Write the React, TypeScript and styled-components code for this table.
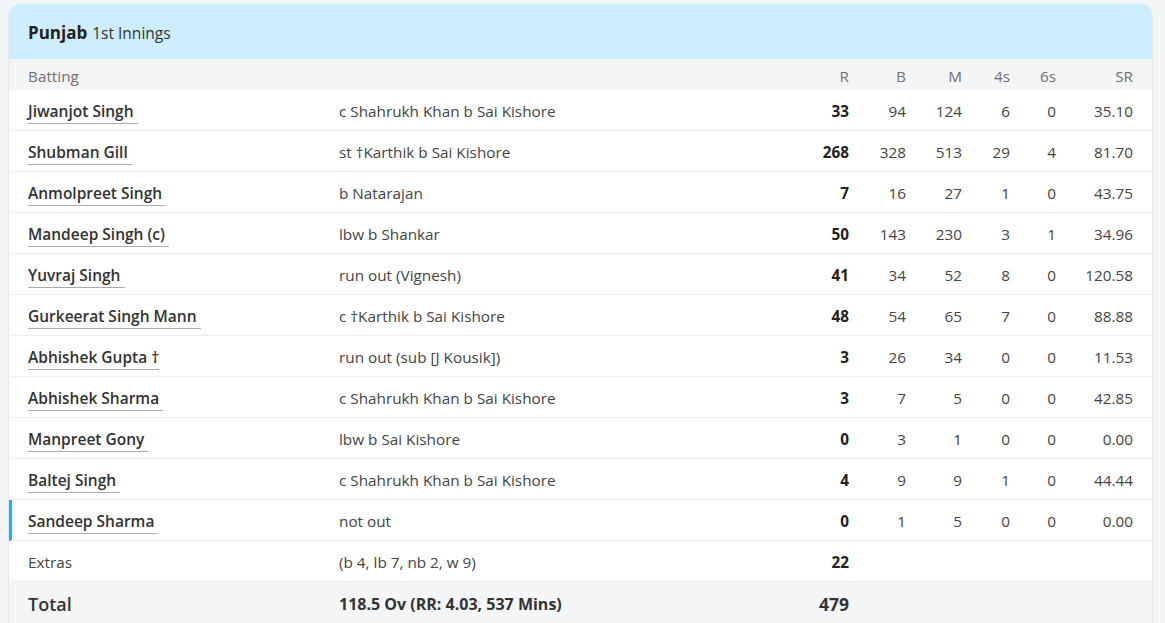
import styled, { createGlobalStyle } from 'styled-components'

interface IBatter {
  name: string
  extra?: string
  dismissal: string
  r: number
  b: number
  m: number
  fours: number
  sixes: number
  sr: string
  atCrease?: boolean
}

const batters: IBatter[] = [
  { name: 'Jiwanjot Singh', dismissal: 'c Shahrukh Khan b Sai Kishore', r: 33, b: 94, m: 124, fours: 6, sixes: 0, sr: '35.10' },
  { name: 'Shubman Gill', dismissal: 'st †Karthik b Sai Kishore', r: 268, b: 328, m: 513, fours: 29, sixes: 4, sr: '81.70' },
  { name: 'Anmolpreet Singh', dismissal: 'b Natarajan', r: 7, b: 16, m: 27, fours: 1, sixes: 0, sr: '43.75' },
  { name: 'Mandeep Singh (c)', dismissal: 'lbw b Shankar', r: 50, b: 143, m: 230, fours: 3, sixes: 1, sr: '34.96' },
  { name: 'Yuvraj Singh', dismissal: 'run out (Vignesh)', r: 41, b: 34, m: 52, fours: 8, sixes: 0, sr: '120.58' },
  { name: 'Gurkeerat Singh Mann', dismissal: 'c †Karthik b Sai Kishore', r: 48, b: 54, m: 65, fours: 7, sixes: 0, sr: '88.88' },
  { name: 'Abhishek Gupta', extra: '†', dismissal: 'run out (sub [J Kousik])', r: 3, b: 26, m: 34, fours: 0, sixes: 0, sr: '11.53' },
  { name: 'Abhishek Sharma', dismissal: 'c Shahrukh Khan b Sai Kishore', r: 3, b: 7, m: 5, fours: 0, sixes: 0, sr: '42.85' },
  { name: 'Manpreet Gony', dismissal: 'lbw b Sai Kishore', r: 0, b: 3, m: 1, fours: 0, sixes: 0, sr: '0.00' },
  { name: 'Baltej Singh', dismissal: 'c Shahrukh Khan b Sai Kishore', r: 4, b: 9, m: 9, fours: 1, sixes: 0, sr: '44.44' },
  { name: 'Sandeep Sharma', dismissal: 'not out', r: 0, b: 1, m: 5, fours: 0, sixes: 0, sr: '0.00', atCrease: true },
]

export default function App() {
  return (
    <>
      <GlobalStyle />
      <Card>
        <Header>
          <Team>Punjab</Team>
          <Innings>1st Innings</Innings>
        </Header>
        <HeadRow>
          <span>Batting</span>
          <span />
          <Num>R</Num>
          <Num>B</Num>
          <Num>M</Num>
          <Num>4s</Num>
          <Num>6s</Num>
          <Num>SR</Num>
        </HeadRow>
        {batters.map((p) => (
          <Row key={p.name} $active={p.atCrease}>
            <span>
              <Name>
                {p.name}
                {p.extra ? ` ${p.extra}` : '\u00a0'}
              </Name>
            </span>
            <span>{p.dismissal}</span>
            <Runs>{p.r}</Runs>
            <Num>{p.b}</Num>
            <Num>{p.m}</Num>
            <Num>{p.fours}</Num>
            <Num>{p.sixes}</Num>
            <Num>{p.sr}</Num>
          </Row>
        ))}
        <Row>
          <span>Extras</span>
          <span>(b 4, lb 7, nb 2, w 9)</span>
          <Runs>22</Runs>
        </Row>
        <TotalRow>
          <TotalLabel>Total</TotalLabel>
          <TotalInfo>118.5 Ov (RR: 4.03, 537 Mins)</TotalInfo>
          <TotalRuns>479</TotalRuns>
        </TotalRow>
      </Card>
    </>
  )
}

const GlobalStyle = createGlobalStyle`
  body {
    margin: 0;
    padding: 4px 12px 0 8px;
    background: #f4f5f7;
    font-family: 'Open Sans', 'Noto Sans', sans-serif;
    color: #333;
  }
`

const Card = styled.div`
  background: #fff;
  border: 1px solid #e6e8eb;
  border-top: none;
  border-radius: 12px 12px 0 0;
  overflow: hidden;
`

const Header = styled.div`
  display: flex;
  align-items: baseline;
  gap: 5px;
  height: 55px;
  padding: 0 19px;
  background: #cdedfd;
  line-height: 58px;
`

const Team = styled.span`
  font-size: 17px;
  font-weight: 700;
  color: #222;
`

const Innings = styled.span`
  font-size: 15.5px;
  color: #333;
`

const grid = `
  display: grid;
  grid-template-columns: 311px 1fr 60px 57px 56px 48px 46px 77px;
  align-items: center;
  padding: 0 19px 0 19px;
`

const HeadRow = styled.div`
  ${grid}
  height: 31px;
  padding-top: 2px;
  background: #f4f5f7;
  font-size: 15.3px;
  color: #707070;
  box-sizing: border-box;
`

const Row = styled.div<{ $active?: boolean }>`
  ${grid}
  height: 40px;
  padding-top: 2px;
  box-sizing: border-box;
  height: 41px;
  border-bottom: 1px solid #ececec;
  border-left: 3px solid ${(p) => (p.$active ? '#19aef0' : 'transparent')};
  padding-left: 16px;
  font-size: 15.3px;
  color: #444;
`

const Name = styled.span`
  font-size: 15.5px;
  font-weight: 600;
  color: #333;
  border-bottom: 1px solid #ababab;
  padding-bottom: 1px;
`

const Num = styled.span`
  text-align: right;
`

const Runs = styled(Num)`
  font-weight: 700;
  color: #222;
`

const TotalRow = styled.div`
  ${grid}
  height: 42px;
  padding-top: 2px;
  box-sizing: border-box;
  background: #f4f5f7;
  color: #333;
`

const TotalLabel = styled.span`
  font-size: 18px;
  font-weight: 600;
`

const TotalInfo = styled.span`
  font-size: 16px;
  font-weight: 700;
`

const TotalRuns = styled(Num)`
  font-size: 17.5px;
  font-weight: 700;
`
